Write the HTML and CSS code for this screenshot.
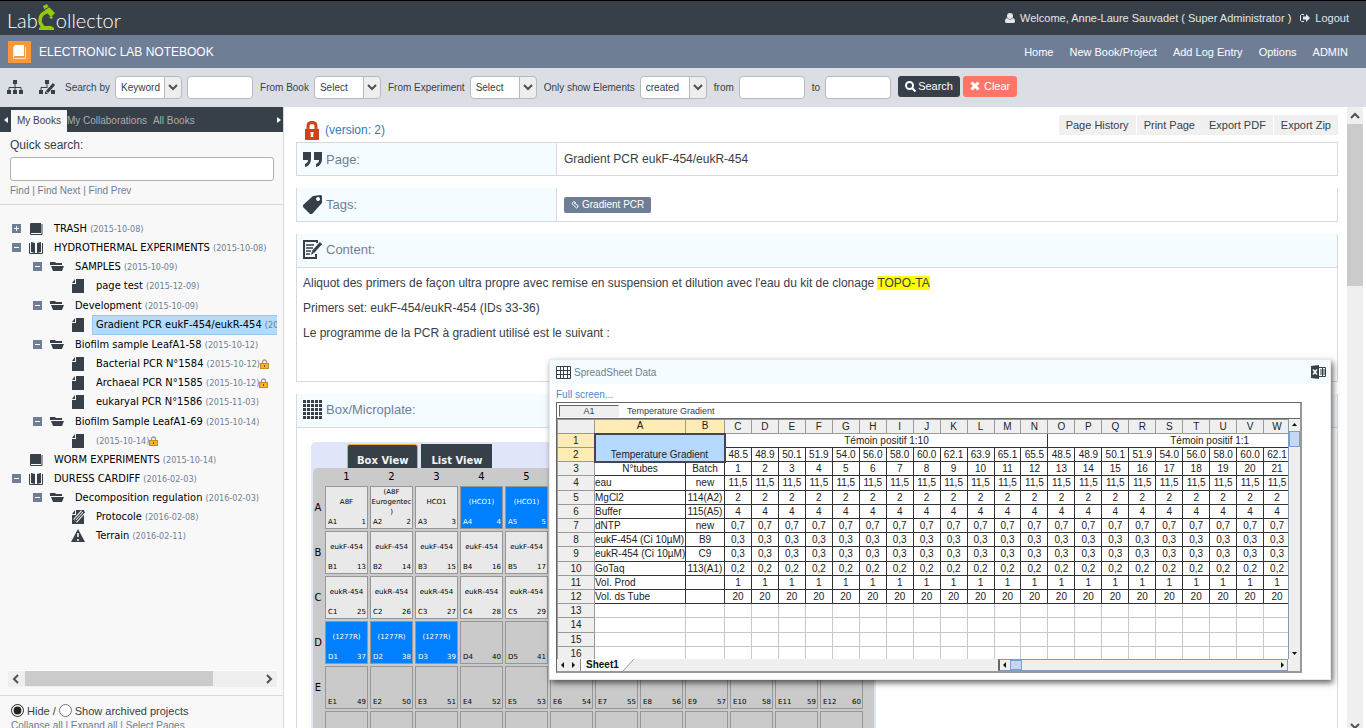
FILE: index.html
```
<!DOCTYPE html>
<html lang="en">
<head>
    <meta charset="UTF-8">
    <meta name="viewport" content="width=device-width, initial-scale=1.0">
    <title>LabCollector - Electronic Lab Notebook</title>
    <link rel="stylesheet" href="styles.css">
</head>
<body>
    <!-- shared icons -->
    <svg class="sprite" aria-hidden="true">
        <symbol id="i-plus" viewBox="0 0 9 9"><path fill="#707e95" d="M0 0h9v9H0z"/><path fill="#fff" d="M2 4h5v1H2zM4 2h1v5H4z"/></symbol>
        <symbol id="i-minus" viewBox="0 0 9 9"><path fill="#707e95" d="M0 0h9v9H0z"/><path fill="#fff" d="M2 4h5v1H2z"/></symbol>
        <symbol id="i-book" viewBox="0 0 14 14"><path fill="#374049" d="M2 1h10v10H2a1 1 0 0 0-1 1V2a1 1 0 0 1 1-1z"/><path fill="none" stroke="#374049" d="M1.500 11v1.500h11.500V2"/></symbol>
        <symbol id="i-open" viewBox="0 0 14 14"><path fill="#374049" d="M2 1l4 1v10l-4-1zM12 1L8 2v10l4-1z"/><path fill="none" stroke="#374049" d="M.5 2v10.500h13V2"/></symbol>
        <symbol id="i-folder" viewBox="0 0 14 14"><path fill="#374049" d="M0 2h5l1 1h6v2H0zM1 6h13l-2 5H3z"/></symbol>
        <symbol id="i-page" viewBox="0 0 14 14"><path fill="#374049" d="M5 0h8v14H1V5h4zM4 0v4H1z"/></symbol>
        <symbol id="i-protocol" viewBox="0 0 14 14"><path fill="#374049" d="M5 0h8v14H1V5h4zM4 0v4H1z"/><path fill="none" stroke="#f8f8f8" stroke-width="5" d="M4 11l8-9"/><path fill="none" stroke="#374049" stroke-width="3" d="M4 11l9-10"/><path stroke="#f8f8f8" d="M5 10l7-8"/></symbol>
        <symbol id="i-warn" viewBox="0 0 14 14"><path fill="#374049" d="M7 0l7 13H0z"/><path stroke="#fff" stroke-width="1.500" d="M7 4v4M7 10v2"/></symbol>
        <symbol id="i-padlock" viewBox="0 0 9 10"><path fill="none" stroke="#999" stroke-width="1.300" d="M2.500 5V3a2 2 0 0 1 4 0v2"/><rect x=".5" y="4.500" width="8" height="5" fill="#f5b62e" stroke="#c98a1b"/><path fill="#6b4a10" d="M4 6h1v2H4z"/></symbol>
    </svg>

    <header class="topbar">
        <a class="logo" href="#" aria-label="LabCollector">
            <span>Lab</span>
            <svg width="18" height="26" viewBox="0 0 18 26">
                <path fill="#93c90f" d="M5 2l4-2 1 2 1 1 6 6-4 4-6-6z"/>
                <path fill="none" stroke="#93c90f" stroke-width="3.500" d="M9 8C4 9 2 13 2 17c0 3 2 5 4 7"/>
                <path fill="#93c90f" d="M1 26v-2l3-2h9l3 2v2zM11 13l3-1 1 2-2 1z"/>
                <path stroke="#374049" d="M6 6l5-3"/>
            </svg>
            <span>ollector</span>
        </a>
        <div class="user">
            <svg width="10" height="10" viewBox="0 0 10 10"><circle cx="5" cy="3" r="3" fill="#e3e6ea"/><path fill="#e3e6ea" d="M0 9c0-3 1-4 2-4 2 2 4 2 6 0 1 0 2 1 2 4l-1 1H1z"/></svg>
            <span>Welcome, Anne-Laure Sauvadet ( Super Administrator )</span>
            <a href="#">
                <svg width="10" height="10" viewBox="0 0 10 10"><path fill="none" stroke="#e3e6ea" d="M4 1.500H1.500l-1 1v5l1 1H4"/><path fill="#e3e6ea" d="M3 3.500h3V1l4 4-4 4V6.500H3z"/></svg>
                Logout
            </a>
        </div>
    </header>

    <nav class="navbar">
        <svg width="23" height="22" viewBox="0 0 23 22"><path fill="#f7983a" d="M0 0h23v22H0z"/><path fill="#fff" d="M7 4h9v11H7a1 1 0 0 0-1 1V5z"/><path fill="none" stroke="#fde0c2" d="M5.500 6v11.500h12V6"/></svg>
        <h1>ELECTRONIC LAB NOTEBOOK</h1>
        <div class="menu">
            <a href="#">Home</a>
            <a href="#">New Book/Project</a>
            <a href="#">Add Log Entry</a>
            <a href="#">Options</a>
            <a href="#">ADMIN</a>
        </div>
    </nav>

    <form class="filters">
        <svg class="tool" width="16" height="15" viewBox="0 0 16 15"><path fill="#374049" d="M6 0h4v4H6zM0 10h4v4H0zM6 10h4v4H6zM12 10h4v4h-4z"/><path fill="none" stroke="#374049" d="M8 4v6M2 10V7.500h12V10"/></svg>
        <svg class="tool" width="17" height="15" viewBox="0 0 17 15"><path fill="#374049" d="M6 0h4v4H6zM0 10h4v4H0zM12 10h4v4h-4z"/><path fill="none" stroke="#374049" d="M8 4v4M2 10V7.500h6"/><path stroke="#374049" stroke-width="3" d="M8 12l7-8"/><path fill="#374049" d="M6 11l3 3H6z"/></svg>
        <div class="field">
            <label for="search-by">Search by</label>
            <select id="search-by"><option>Keyword</option></select>
            <input type="text" aria-label="Search text">
        </div>
        <div class="field">
            <label for="from-book">From Book</label>
            <select id="from-book"><option>Select</option></select>
        </div>
        <div class="field">
            <label for="from-exp">From Experiment</label>
            <select id="from-exp"><option>Select</option></select>
        </div>
        <div class="field">
            <label for="only-show">Only show Elements</label>
            <select id="only-show"><option>created</option></select>
        </div>
        <div class="field">
            <label for="date-from">from</label>
            <input id="date-from" type="text">
        </div>
        <div class="field">
            <label for="date-to">to</label>
            <input id="date-to" type="text">
        </div>
        <div class="actions">
            <button class="btn" type="button"><svg width="11" height="11" viewBox="0 0 11 11"><circle cx="4.500" cy="4.500" r="3.500" fill="none" stroke="#fff" stroke-width="2"/><path stroke="#fff" stroke-width="2" d="M7 7l3.500 3.500"/></svg>Search</button>
            <button class="btn btn-clear" type="button"><svg width="10" height="10" viewBox="0 0 10 10"><path stroke="#fff" stroke-width="3" d="M1.500 1.500l7 7M8.500 1.500l-7 7"/></svg>Clear</button>
        </div>
    </form>

    <div class="main">
        <aside class="sidebar">
            <div class="book-tabs">
                <svg width="4" height="6" viewBox="0 0 4 6"><path fill="#fff" d="M4 0v6L0 3z"/></svg>
                <a class="active" href="#">My Books</a>
                <a href="#">My Collaborations</a>
                <a href="#">All Books</a>
                <svg class="next" width="4" height="6" viewBox="0 0 4 6"><path fill="#fff" d="M0 0v6l4-3z"/></svg>
            </div>
            <div class="quick">
                <label for="quick-search">Quick search:</label>
                <input id="quick-search" type="text">
                <div class="links"><a href="#">Find</a> | <a href="#">Find Next</a> | <a href="#">Find Prev</a></div>
            </div>
            <div class="tree-wrap">
                <ul class="tree">
                    <li>
                        <div class="row"><svg class="toggle"><use href="#i-plus"/></svg><svg class="icon"><use href="#i-book"/></svg><a href="#">TRASH <small>(2015-10-08)</small></a></div>
                    </li>
                    <li>
                        <div class="row"><svg class="toggle"><use href="#i-minus"/></svg><svg class="icon"><use href="#i-open"/></svg><a href="#">HYDROTHERMAL EXPERIMENTS <small>(2015-10-08)</small></a></div>
                        <ul>
                            <li class="folder">
                                <div class="row"><svg class="toggle"><use href="#i-minus"/></svg><svg class="icon"><use href="#i-folder"/></svg><a href="#">SAMPLES <small>(2015-10-09)</small></a></div>
                                <ul>
                                    <li><div class="row"><svg class="icon"><use href="#i-page"/></svg><a href="#">page test <small>(2015-12-09)</small></a></div></li>
                                </ul>
                            </li>
                            <li class="folder">
                                <div class="row"><svg class="toggle"><use href="#i-minus"/></svg><svg class="icon"><use href="#i-folder"/></svg><a href="#">Development <small>(2015-10-09)</small></a></div>
                                <ul>
                                    <li><div class="row selected"><svg class="icon"><use href="#i-page"/></svg><a href="#">Gradient PCR eukF-454/eukR-454 <small>(2015-10-09)</small></a></div></li>
                                </ul>
                            </li>
                            <li class="folder">
                                <div class="row"><svg class="toggle"><use href="#i-minus"/></svg><svg class="icon"><use href="#i-folder"/></svg><a href="#">Biofilm sample LeafA1-58 <small>(2015-10-12)</small></a></div>
                                <ul>
                                    <li><div class="row"><svg class="icon"><use href="#i-page"/></svg><a href="#">Bacterial PCR N°1584 <small>(2015-10-12)</small></a><svg class="lock"><use href="#i-padlock"/></svg></div></li>
                                    <li><div class="row"><svg class="icon"><use href="#i-page"/></svg><a href="#">Archaeal PCR N°1585 <small>(2015-10-12)</small></a><svg class="lock"><use href="#i-padlock"/></svg></div></li>
                                    <li><div class="row"><svg class="icon"><use href="#i-page"/></svg><a href="#">eukaryal PCR N°1586 <small>(2015-11-03)</small></a></div></li>
                                </ul>
                            </li>
                            <li class="folder">
                                <div class="row"><svg class="toggle"><use href="#i-minus"/></svg><svg class="icon"><use href="#i-folder"/></svg><a href="#">Biofilm Sample LeafA1-69 <small>(2015-10-14)</small></a></div>
                                <ul>
                                    <li><div class="row"><svg class="icon"><use href="#i-page"/></svg><a href="#"><small>(2015-10-14)</small></a><svg class="lock"><use href="#i-padlock"/></svg></div></li>
                                </ul>
                            </li>
                        </ul>
                    </li>
                    <li>
                        <div class="row"><svg class="icon"><use href="#i-book"/></svg><a href="#">WORM EXPERIMENTS <small>(2015-10-14)</small></a></div>
                    </li>
                    <li>
                        <div class="row"><svg class="toggle"><use href="#i-minus"/></svg><svg class="icon"><use href="#i-open"/></svg><a href="#">DURESS CARDIFF <small>(2016-02-03)</small></a></div>
                        <ul>
                            <li class="folder">
                                <div class="row"><svg class="toggle"><use href="#i-minus"/></svg><svg class="icon"><use href="#i-folder"/></svg><a href="#">Decomposition regulation <small>(2016-02-03)</small></a></div>
                                <ul>
                                    <li><div class="row"><svg class="icon"><use href="#i-protocol"/></svg><a href="#">Protocole <small>(2016-02-08)</small></a></div></li>
                                    <li><div class="row"><svg class="icon"><use href="#i-warn"/></svg><a href="#">Terrain <small>(2016-02-11)</small></a></div></li>
                                </ul>
                            </li>
                        </ul>
                    </li>
                </ul>
                <div class="hscroll">
                    <svg width="17" height="16" viewBox="0 0 17 16"><path fill="none" stroke="#505050" stroke-width="2" d="M10 4L6 8l4 4"/></svg>
                    <div class="track"><div class="thumb"></div></div>
                    <svg width="17" height="16" viewBox="0 0 17 16"><path fill="none" stroke="#505050" stroke-width="2" d="M7 4l4 4-4 4"/></svg>
                </div>
            </div>
            <div class="side-foot">
                <div class="archived">
                    <input type="radio" name="archived" id="arch-hide" checked><label for="arch-hide">Hide /</label>
                    <input type="radio" name="archived" id="arch-show"><label for="arch-show">Show archived projects</label>
                </div>
                <div class="links"><a href="#">Collapse all</a> | <a href="#">Expand all</a> | <a href="#">Select Pages</a></div>
            </div>
        </aside>

        <main class="content">
            <div class="page-top">
                <svg width="14" height="19" viewBox="0 0 14 19"><path fill="none" stroke="#cb4519" stroke-width="3" d="M3 9V5c0-2 1-3.500 4-3.500S11 3 11 5v4"/><path fill="#cb4519" d="M0 8h14v11H0z"/><path fill="#fff" d="M5.500 11h3v2l-.5 1 .5 2h-3l.5-2-.5-1z"/></svg>
                <a class="version" href="#">(version: 2)</a>
                <div class="page-actions">
                    <button type="button">Page History</button>
                    <div><button type="button">Print Page</button><button type="button">Export PDF</button></div>
                    <button type="button">Export Zip</button>
                </div>
            </div>

            <section class="box split first">
                <h2>
                    <svg width="19" height="19" viewBox="0 0 19 19"><path fill="#374049" d="M0 2h8v6c0 5-2 8-6 9v-3c2-1 3-2 3-4H0zM11 2h8v6c0 5-2 8-6 9v-3c2-1 3-2 3-4h-5z"/></svg>
                    Page:
                </h2>
                <div class="value">Gradient PCR eukF-454/eukR-454</div>
            </section>

            <section class="box split">
                <h2>
                    <svg width="19" height="19" viewBox="0 0 19 19"><path fill="#374049" fill-rule="evenodd" d="M10 1l8-1 1 1v7L9 19H7l-7-7v-2zM15 2a2 2 0 1 0 .1 0z"/></svg>
                    Tags:
                </h2>
                <div class="value"><a class="tag" href="#"><svg width="8" height="8" viewBox="0 0 8 8"><path fill="none" stroke="#fff" d="M5 2L3 .5.800 2.500 5.500 7 7 6V4.500L3 2"/></svg>Gradient PCR</a></div>
            </section>

            <section class="box">
                <h2>
                    <svg width="19" height="19" viewBox="0 0 19 19"><path fill="none" stroke="#374049" stroke-width="2" d="M14 3V1H1v17h12v-4"/><path stroke="#374049" stroke-width="1.500" d="M3 5h8M3 8h7M3 11h5M3 14h4"/><path stroke="#374049" stroke-width="3" d="M10 12l8-9"/><path fill="#374049" d="M8 15l1-4 2 2z"/></svg>
                    Content:
                </h2>
                <div class="text">
                    <p>Aliquot des primers de façon ultra propre avec remise en suspension et dilution avec l'eau du kit de clonage <mark>TOPO-TA</mark></p>
                    <p>Primers set: eukF-454/eukR-454 (IDs 33-36)</p>
                    <p>Le programme de la PCR à gradient utilisé est le suivant :</p>
                </div>
            </section>

            <section class="box plate-box">
                <h2>
                    <svg width="19" height="19" viewBox="0 0 19 19"><path stroke="#374049" stroke-width="3" stroke-dasharray="3 1" d="M0 1.500h19M0 5.500h19M0 9.500h19M0 13.500h19M0 17.500h19"/></svg>
                    Box/Microplate:
                </h2>
                <div class="plate-wrap">
                    <div class="plate-tabs">
                        <button class="active" type="button">Box View</button>
                        <button type="button">List View</button>
                    </div>
                    <div class="plate" id="plate"></div>
                </div>
            </section>

            <div class="sheet-window">
                <div class="sheet-title">
                    <svg width="15" height="13" viewBox="0 0 15 13"><path fill="#fff" stroke="#374049" d="M.5.5h14v12H.5zM.5 4.500h14M.5 8.500h14M4.500.5v12M7.500.5v12M11.500.5v12"/></svg>
                    <span>SpreadSheet Data</span>
                    <svg width="15" height="14" viewBox="0 0 15 14"><path fill="#374049" d="M0 1l8-1v14l-8-1z"/><path stroke="#fff" stroke-width="1.500" d="M2 4.500l4 5M6 4.500l-4 5"/><path fill="none" stroke="#374049" d="M8 2.500h6.500v9H8M9 5h5M9 7h5M9 9h5M11.500 3v8"/></svg>
                </div>
                <a class="full-screen" href="#">Full screen...</a>
                <div class="sheet">
                    <div class="formula"><span class="cell-ref">A1</span><span>Temperature Gradient</span></div>
                    <div class="sheet-body">
                        <div class="grid-clip"><table id="sheet"></table></div>
                        <div class="vbar">
                            <svg width="11" height="12" viewBox="0 0 11 12"><path fill="#111" d="M3 7h5L5.500 4z"/></svg>
                            <div class="knob"></div>
                            <svg width="11" height="12" viewBox="0 0 11 12"><path fill="#111" d="M3 5h5L5.500 8z"/></svg>
                        </div>
                    </div>
                    <div class="sheet-foot">
                        <svg width="24" height="12" viewBox="0 0 24 12"><path fill="#111" d="M7 3v6L4 6zM15 3v6l3-3z"/><path stroke="#888" d="M23.500 0v12"/></svg>
                        <span class="sheet-tab">Sheet1</span>
                        <svg width="12" height="12" viewBox="0 0 12 12"><path fill="#fff" d="M0 0h12L1 12H0z"/><path stroke="#999" d="M12 0L1 12"/></svg>
                        <div class="hbar">
                            <svg width="10" height="10" viewBox="0 0 10 10"><path fill="#111" d="M6 2v6L3 5z"/></svg>
                            <div class="knob"></div>
                            <svg width="10" height="10" viewBox="0 0 10 10"><path fill="#111" d="M4 2v6l3-3z"/></svg>
                        </div>
                    </div>
                </div>
            </div>
        </main>

        <div class="vscroll">
            <svg width="16" height="17" viewBox="0 0 16 17"><path fill="none" stroke="#505050" stroke-width="2" d="M4 11l4-4 4 4"/></svg>
            <div class="thumb"></div>
            <svg width="16" height="17" viewBox="0 0 16 17"><path fill="none" stroke="#505050" stroke-width="2" d="M4 13l4 4 4-4"/></svg>
        </div>
    </div>

    <script src="script.js"></script>
</body>
</html>
```
FILE: styles.css
```
:root {
    --dark: #374049;
    --slate: #707e95;
    --bar: #dcdee6;
    --line: #d9d9d9;
    --head: #f4fcff;
    --link: #337ab7;
}

* {
    margin: 0;
    padding: 0;
    box-sizing: border-box;
}

body {
    height: 100vh;
    display: flex;
    flex-direction: column;
    overflow: hidden;
    font-family: "Liberation Sans", Arial, sans-serif;
    font-size: 12px;
    color: var(--dark);
    background: #fff;
}

a {
    color: inherit;
    text-decoration: none;
}

ul {
    list-style: none;
}

svg {
    flex: none;
}

button,
input,
select {
    font-family: inherit;
    color: inherit;
}

.sprite {
    display: none;
}

/* top bars */
.topbar {
    flex: none;
    display: flex;
    justify-content: space-between;
    align-items: center;
    height: 35px;
    padding: 0 17px 0 7px;
    border-top: 1px solid #000;
    background: var(--dark);
    color: #e3e6ea;
    font-size: 11px;
}

.logo {
    display: flex;
    align-items: center;
    font-family: Lato, sans-serif;
    font-weight: 300;
    font-size: 20px;
    line-height: 26px;
    padding-top: 3px;
    color: #fff;
}

.logo svg {
    margin-top: -5px;
}

.user,
.user a {
    display: flex;
    align-items: center;
    gap: 5px;
}

.user a {
    padding-left: 4px;
}

.navbar {
    flex: none;
    display: flex;
    align-items: center;
    gap: 8px;
    height: 33px;
    padding: 0 18px 0 8px;
    background: var(--slate);
    color: #fff;
}

.navbar h1 {
    font-size: 12px;
    font-weight: normal;
}

.menu {
    display: flex;
    gap: 16px;
    margin-left: auto;
    font-size: 11px;
}

.filters {
    flex: none;
    display: flex;
    align-items: center;
    gap: 7px;
    height: 39px;
    padding: 0 7px;
    background: var(--bar);
    font-size: 10px;
}

.filters .tool {
    margin-right: 9px;
}

.filters .tool + .tool {
    margin-right: 2px;
}

.field {
    display: flex;
    align-items: center;
    gap: 5px;
    white-space: nowrap;
}

.field select,
.field input {
    width: 66px;
    height: 23px;
    border: 1px solid #b9b9b9;
    border-radius: 4px;
    background: #fff;
    font-size: 10px;
}

.field select {
    width: 67px;
    appearance: none;
    padding-left: 5px;
    background: url("data:image/svg+xml,%3Csvg xmlns='http://www.w3.org/2000/svg' width='17' height='21'%3E%3Cpath fill='%23eee' d='M0 0h17v21H0z'/%3E%3Cpath stroke='%23b9b9b9' d='M.5 0v21'/%3E%3Cpath fill='none' stroke='%23505050' stroke-width='2' d='M5 8l4 4 4-4'/%3E%3C/svg%3E") right center no-repeat #fff;
}

.actions {
    display: flex;
    gap: 3px;
    margin-top: -3px;
}

.btn {
    display: flex;
    align-items: center;
    gap: 2px;
    height: 21px;
    padding: 0 7px;
    border: 0;
    border-radius: 3px;
    background: var(--dark);
    color: #fff;
    font-size: 11px;
}

.btn-clear {
    gap: 4px;
    background: #ff7669;
}

.main {
    flex: 1;
    min-height: 0;
    display: flex;
    padding-right: 3px;
}

/* sidebar */
.sidebar {
    flex: none;
    width: 284px;
    display: flex;
    flex-direction: column;
    overflow: hidden;
    border-right: 1px solid var(--line);
    background: #f8f8f8;
}

.book-tabs {
    flex: none;
    display: flex;
    align-items: center;
    height: 25px;
    padding: 0 3px 0 4px;
    margin-right: -1px;
    background: var(--dark);
    color: #a9adb1;
    font-size: 10px;
}

.book-tabs a {
    align-self: flex-end;
    padding: 0 3px;
    line-height: 22px;
}

.book-tabs .active {
    padding: 0 6px;
    margin: 0 -3px 0 3px;
    background: #f8f8f8;
    color: var(--dark);
}

.book-tabs .next {
    margin-left: auto;
}

.quick {
    flex: none;
    height: 73px;
    padding: 6px 9px 0 10px;
    border-bottom: 1px solid var(--line);
}

.quick label {
    display: block;
    line-height: 15px;
}

.quick input {
    display: block;
    width: 100%;
    height: 24px;
    margin: 4px 0 3px;
    border: 1px solid #b0b0b0;
    border-radius: 3px;
    background: #fff;
}

.links {
    font-size: 10px;
    line-height: 14px;
    color: var(--slate);
}

.tree-wrap {
    flex: 1;
    min-height: 0;
    display: flex;
    flex-direction: column;
    overflow: hidden;
    margin: 0 6px 8px 8px;
}

.tree {
    flex: 1;
    min-height: 0;
    overflow: hidden;
    padding: 14px 0 0 4px;
    font-family: "DejaVu Sans Condensed", "DejaVu Sans", sans-serif;
    font-size: 11px;
    color: #000;
}

.tree ul {
    padding-left: 21px;
}

.folder + .folder {
    margin-top: 1px;
}

.row {
    display: flex;
    align-items: center;
    height: 19px;
    white-space: nowrap;
}

.row .toggle {
    width: 9px;
    height: 9px;
    margin-right: 8px;
}

.row .icon {
    width: 14px;
    height: 14px;
    margin-right: 7px;
}

.row .icon:first-child {
    margin-left: 17px;
}

.row a {
    padding: 0 4px;
    line-height: 17px;
}

.row small {
    font-size: 9px;
    color: var(--slate);
}

.row.selected a {
    border: 1px solid #92c8f2;
    padding: 0 3px;
    background: #b2dcff;
}

.row .lock {
    width: 9px;
    height: 10px;
    margin-left: -4px;
}

.hscroll {
    flex: none;
    display: flex;
    height: 17px;
    border-top: 1px solid #fff;
    background: #efefef;
}

.hscroll .track {
    flex: 1;
}

.hscroll .thumb {
    width: 80%;
    height: 15px;
    background: #cbcbcb;
}

.side-foot {
    flex: none;
    height: 33px;
    padding: 6px 11px 0;
    border-top: 1px solid var(--line);
    overflow: hidden;
}

.archived {
    display: flex;
    align-items: center;
    gap: 3px;
    height: 17px;
    font-size: 11px;
}

.archived input {
    width: 13px;
    height: 13px;
    accent-color: #222;
}

/* page content */
.content {
    flex: 1;
    min-width: 0;
    position: relative;
    overflow: hidden;
    padding: 0 9px 0 12px;
}

.page-top {
    display: flex;
    align-items: center;
    gap: 6px;
    height: 35px;
    padding-left: 9px;
}

.page-top > svg,
.version {
    margin-top: 11px;
}

.version {
    color: var(--link);
}

.page-actions {
    display: flex;
    gap: 1px;
    margin-left: auto;
}

.page-actions button {
    height: 20px;
    padding: 0 7px;
    border: 0;
    background: #f0f0f0;
    font-size: 11px;
}

.box {
    margin-bottom: 12px;
    border: 1px solid var(--line);
    border-top: 0;
}

.box.first {
    border-top: 1px solid var(--line);
}

.box h2 {
    display: flex;
    align-items: center;
    gap: 4px;
    height: 34px;
    padding: 0 0 2px 6px;
    border-bottom: 1px solid var(--line);
    background: var(--head);
    color: var(--slate);
    font-size: 13px;
    font-weight: normal;
}

.split {
    display: flex;
    height: 34px;
}

.split h2 {
    flex: 0 0 25%;
    height: auto;
    padding-bottom: 0;
    border-bottom: 0;
    border-right: 1px solid var(--line);
}

.split .value {
    display: flex;
    align-items: center;
    padding-left: 7px;
}

.tag {
    display: flex;
    align-items: center;
    gap: 3px;
    height: 16px;
    padding: 0 7px;
    border-radius: 2px;
    background: var(--slate);
    color: #fff;
    font-size: 10px;
}

.text {
    padding: 8px 6px 30px;
    line-height: 15px;
}

.text p {
    margin-bottom: 10px;
}

mark {
    background: #ff0;
    color: inherit;
}

/* microplate */
.plate-box {
    padding-bottom: 20px;
}

.plate-wrap {
    width: 565px;
    margin: 14px 0 0 14px;
    padding: 2px 2px 0;
    border-radius: 5px;
    background: #e1e5fa;
}

.plate-tabs {
    display: flex;
    gap: 3px;
    padding-left: 34px;
}

.plate-tabs button {
    height: 24px;
    padding: 8px 10px 0;
    border: 0;
    background: var(--dark);
    color: #f3f4f6;
    font-family: "DejaVu Sans", Verdana, sans-serif;
    font-size: 10px;
    font-weight: bold;
}

.plate-tabs .active {
    padding: 8px 9px 0;
    border: 1px solid #f0a830;
    border-bottom: 0;
    border-radius: 3px 3px 0 0;
}

.plate {
    display: grid;
    grid-template-columns: 10px repeat(12, 43px);
    grid-auto-rows: 43px;
    grid-template-rows: 16px;
    gap: 2px;
    padding: 0 6px 6px 0;
    border-radius: 5px 0 0 0;
    background: #cacaca;
    font-family: "DejaVu Sans", Verdana, sans-serif;
    font-size: 10px;
    color: #000;
}

.plate .axis {
    display: flex;
    align-items: center;
    justify-content: center;
}

.well {
    display: flex;
    flex-direction: column;
    border: 1px solid #979797;
    font-size: 7px;
    line-height: 10px;
}

.well .name {
    flex: 1;
    display: flex;
    align-items: center;
    justify-content: center;
    text-align: center;
    overflow-wrap: anywhere;
}

.well .pos {
    display: flex;
    justify-content: space-between;
    padding: 0 1px 1px 2px;
}

.well.filled {
    background: #e9e9e9;
}

.well.on {
    background: #0080ff;
    color: #fff;
}

/* spreadsheet window */
.sheet-window {
    position: absolute;
    top: 252px;
    left: 265px;
    right: 16px;
    padding-bottom: 6px;
    background: #fff;
    border: 1px solid #e6eaec;
    box-shadow: 2px 3px 6px rgba(0, 0, 0, 0.6);
}

.sheet-title {
    display: flex;
    align-items: center;
    gap: 3px;
    height: 24px;
    padding: 0 4px 0 6px;
    background: var(--head);
    color: var(--slate);
    font-size: 10px;
}

.sheet-title span {
    flex: 1;
}

.full-screen {
    display: block;
    padding: 5px 6px 0;
    line-height: 12px;
    font-size: 10px;
    color: #4a8bc9;
}

.sheet {
    margin: 1px 28px 0 6px;
    border: 1px solid #666;
    border-right: 2px solid #999;
    border-bottom: 2px solid #999;
    background: #fff;
}

.formula {
    display: flex;
    align-items: center;
    gap: 8px;
    height: 16px;
    padding: 2px;
    border-bottom: 1px solid #666;
    font-size: 9px;
    line-height: 10px;
}

.cell-ref {
    width: 60px;
    border: 1px solid #999;
    border-color: #666 #eee #eee #666;
    background: #efefef;
    text-align: center;
}

.sheet-body {
    display: flex;
    height: 240px;
}

.grid-clip {
    flex: 1;
    min-width: 0;
    overflow: hidden;
}

.grid-clip table {
    width: 815px;
    table-layout: fixed;
    border-collapse: collapse;
    font-size: 10px;
    line-height: 12px;
    color: #222;
}

.grid-clip tr {
    height: 14px;
}

.grid-clip tr:nth-child(5n) {
    height: 15px;
}

.grid-clip th,
.grid-clip td {
    overflow: hidden;
    border: 1px solid #c8c8c8;
    text-align: center;
    white-space: nowrap;
    font-weight: normal;
}

.grid-clip th {
    background: #efefef;
    border-color: #999;
}

.grid-clip th.hot {
    background: #ffecb5;
}

.grid-clip td.ink {
    border-color: #333;
}

.grid-clip td.name {
    text-align: left;
}

.grid-clip td.picked {
    border: 2px solid #445;
    background: #b5d9ff;
    vertical-align: bottom;
}

.c-head {
    width: 37px;
}

.c-a {
    width: 91px;
}

.c-b {
    width: 39px;
}

.vbar {
    flex: none;
    width: 12px;
    display: flex;
    flex-direction: column;
    justify-content: space-between;
    border-left: 1px solid #7f9db9;
    background: #efefef;
}

.knob {
    border: 1px solid #7a9fd8;
    background: #c3d8f7;
}

.vbar .knob {
    height: 16px;
    margin-bottom: auto;
}

.sheet-foot {
    display: flex;
    height: 12px;
    background: #efefef;
}

.sheet-tab {
    padding: 0 3px 0 5px;
    background: #fff;
    color: #111;
    font-size: 10px;
    font-weight: bold;
    line-height: 12px;
}

.hbar {
    display: flex;
    width: 290px;
    margin: 0 12px 0 auto;
    border: 1px solid #7f9db9;
    border-left: 2px solid #666;
}

.hbar .knob {
    width: 12px;
    margin-right: auto;
}

/* page scrollbar */
.vscroll {
    flex: none;
    width: 16px;
    display: flex;
    flex-direction: column;
    background: #efefef;
}

.vscroll .thumb {
    height: 162px;
    margin-bottom: auto;
    background: #cbcbcb;
}
```
FILE: script.js
```
// microplate
const plate = document.getElementById("plate");
const wells = {
    A1: "A8F", A2: "(A8F Eurogentec)", A3: "HCO1", A4: "(HCO1)", A5: "(HCO1)",
    D1: "(1277R)", D2: "(1277R)", D3: "(1277R)"
};
for (let c = 1; c <= 12; c++) {
    wells["B" + c] = "eukF-454";
    wells["C" + c] = "eukR-454";
}
const picked = ["A4", "A5", "D1", "D2", "D3"];

let html = "<span></span>";
for (let c = 1; c <= 12; c++) {
    html += `<span class="axis">${c}</span>`;
}
["A", "B", "C", "D", "E", "F", "G", "H"].forEach((letter, r) => {
    html += `<span class="axis">${letter}</span>`;
    for (let c = 1; c <= 12; c++) {
        const id = letter + c;
        const state = picked.includes(id) ? " on" : wells[id] ? " filled" : "";
        html += `<div class="well${state}"><span class="name">${(wells[id] || "").replace("-", "\u2011")}</span><span class="pos"><span>${id}</span><span>${r * 12 + c}</span></span></div>`;
    }
});
plate.innerHTML = html;

// spreadsheet, columns C to Z hold two runs of 12 tubes
const COLS = 24;
const temps = ["48.5", "48.9", "50.1", "51.9", "54.0", "56.0", "58.0", "60.0", "62.1", "63.9", "65.1", "65.5"];
const rows = [
    ["N°tubes", "Batch", (i) => i + 1],
    ["eau", "new", () => "11,5"],
    ["MgCl2", "114(A2)", () => "2"],
    ["Buffer", "115(A5)", () => "4"],
    ["dNTP", "new", () => "0,7"],
    ["eukF-454 (Ci 10µM)", "B9", () => "0,3"],
    ["eukR-454 (Ci 10µM)", "C9", () => "0,3"],
    ["GoTaq", "113(A1)", () => "0,2"],
    ["Vol. Prod", "", () => "1"],
    ["Vol. ds Tube", "", () => "20"]
];
const cells = (fn, cls) => Array.from({ length: COLS }, (_, i) => `<td class="${cls}">${fn(i)}</td>`).join("");

let sheet = '<colgroup><col class="c-head"><col class="c-a"><col class="c-b"><col span="24"></colgroup>';
sheet += '<tr><th></th><th class="hot">A</th><th class="hot">B</th>';
for (let i = 0; i < COLS; i++) {
    sheet += `<th>${String.fromCharCode(67 + i)}</th>`;
}
sheet += "</tr>";
sheet += '<tr><th class="hot">1</th><td class="picked" colspan="2" rowspan="2">Temperature Gradient</td><td class="ink" colspan="12">Témoin positif 1:10</td><td class="ink" colspan="12">Témoin positif 1:1</td></tr>';
sheet += `<tr><th class="hot">2</th>${cells((i) => temps[i % 12], "ink")}</tr>`;
rows.forEach(([name, batch, fn], n) => {
    sheet += `<tr><th>${n + 3}</th><td class="ink${n ? " name" : ""}">${name}</td><td class="ink">${batch}</td>${cells(fn, "ink")}</tr>`;
});
for (let n = 13; n <= 16; n++) {
    sheet += `<tr><th>${n}</th><td></td><td></td>${cells(() => "", "")}</tr>`;
}
document.getElementById("sheet").innerHTML = sheet;
```
